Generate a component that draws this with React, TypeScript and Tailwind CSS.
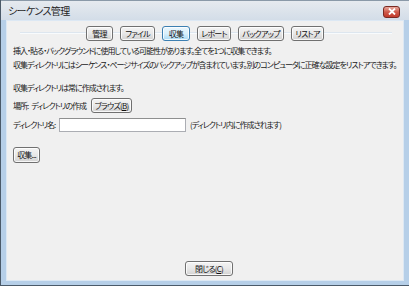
import React from 'react';

const TABS = [
  { label: '管理', w: 'w-[27px]' },
  { label: 'ファイル', w: 'w-[35px]' },
  { label: '収集', w: 'w-[28px]', active: true },
  { label: 'レポート', w: 'w-[34px]' },
  { label: 'バックアップ', w: 'w-[46px]' },
  { label: 'リストア', w: 'w-[33px]' },
];

const Btn = ({ children, className = '', active = false }: { children: React.ReactNode; className?: string; active?: boolean }) => (
  <div
    className={
      'flex items-center justify-center rounded-[3px] border text-[8px] leading-none text-[#111] tracking-[-0.8px] whitespace-nowrap shadow-[inset_0_0_0_1px_rgba(255,255,255,0.8)] ' +
      (active
        ? 'border-[#3c7fb1] bg-gradient-to-b from-[#eaf6fd] via-[#d9f0fc] to-[#a7d9f5] '
        : 'border-[#707070] bg-gradient-to-b from-[#f4f4f4] via-[#e8e8e8] to-[#d2d2d2] ') +
      className
    }
  >
    {children}
  </div>
);

export default function App() {
  return (
    <div className="w-[409px] h-[286px] flex flex-col bg-[#b6cfe8] border-l border-b border-[#4b5a69] font-['Noto_Sans_CJK_JP','Noto_Sans',sans-serif] [font-feature-settings:'palt'] text-[#1a1a1a]">
      {/* title bar */}
      <div className="h-[20px] flex items-center pl-[7px] pr-[9px] bg-gradient-to-b from-[#e6eaef] to-[#d3dde8] border-t border-[#8a99a8]">
        <span className="text-[10px] leading-none text-[#1e1e1e] tracking-[-0.6px]">シーケンス管理</span>
        <div className="ml-auto mt-[2px] w-[17px] h-[12px] rounded-[3px] border border-[#7a2a22] bg-gradient-to-b from-[#e7a79d] via-[#cf5a4b] to-[#c13a2b] flex items-center justify-center">
          <svg width="8" height="7" viewBox="0 0 8 7">
            <path d="M1 0.5 L7 6.5 M7 0.5 L1 6.5" stroke="#fff" strokeWidth="1.8" />
          </svg>
        </div>
      </div>

      {/* client */}
      <div className="flex-1 mx-[5px] mb-[4px] border border-[#dce8f4] bg-[#f0f0f0] flex flex-col px-[6px] text-[8px] leading-none tracking-[-1px] whitespace-nowrap">
        {/* tab buttons */}
        <div className="relative mt-[5px] h-[15px] flex justify-center gap-[7px]">
          <div className="absolute left-[7px] right-[5px] top-[6px] h-[2px] bg-[#dde6ef] border-b border-[#f8fbfd]" />
          {TABS.map(t => (
            <Btn key={t.label} active={t.active} className={'relative h-[15px] ' + t.w}>
              {t.label}
            </Btn>
          ))}
        </div>

        <div className="mt-[6px]">
          挿入・貼る・バックグラウンドに使用している可能性があります。全てを1つに収集できます。
        </div>
        <div className="mt-[6px]">
          収集ディレクトリにはシーケンス・ページサイズのバックアップが含まれています。別のコンピュータに正確な設定をリストアできます。
        </div>
        <div className="mt-[15px]">収集ディレクトリは常に作成されます。</div>

        <div className="mt-[6px] flex items-center gap-[5px]">
          <span>場所:<span className="ml-[3px]">ディレクトリの作成</span></span>
          <Btn className="w-[41px] h-[15px]">
            <span>ブラウズ(<span className="underline">B</span>)</span>
          </Btn>
        </div>

        <div className="mt-[5px] flex items-center">
          <span className="w-[46px]">ディレクトリ名:</span>
          <div className="w-[127px] h-[14px] bg-white border border-[#abadb3] border-t-[#8e8f8f]" />
          <span className="ml-[4px]">(ディレクトリ内に作成されます)</span>
        </div>

        <Btn className="mt-[15px] w-[27px] h-[16px]">収集...</Btn>

        <div className="flex-1" />
        <div className="flex justify-center mb-[4px]">
          <Btn className="w-[48px] h-[15px] ml-[8px]">
            <span>閉じる(<span className="underline">C</span>)</span>
          </Btn>
        </div>
      </div>
    </div>
  );
}
